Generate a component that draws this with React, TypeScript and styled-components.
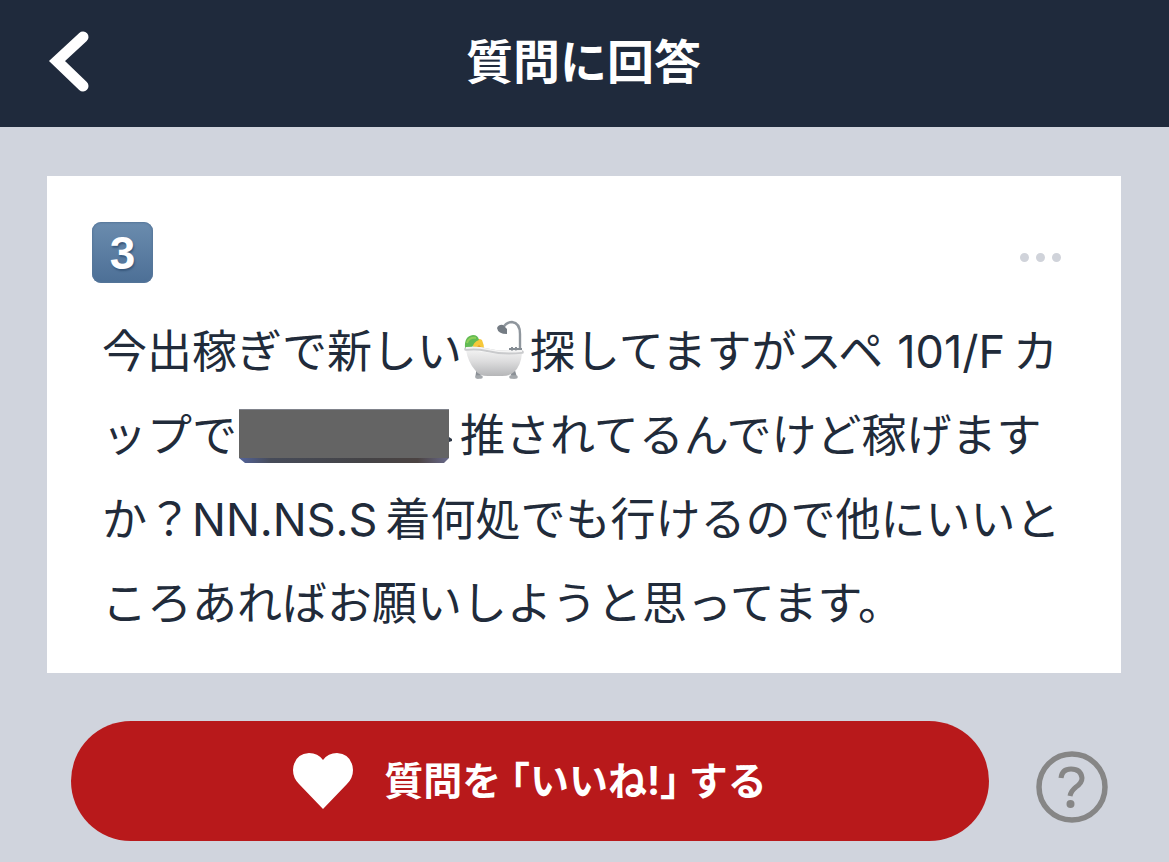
import React from "react";
import styled, { createGlobalStyle } from "styled-components";

const GlobalStyle = createGlobalStyle`
  *, *::before, *::after { box-sizing: border-box; }
  body {
    margin: 0;
    background: #d0d4dd;
    color: #212b3a;
    font-family: Inter, "Noto Sans CJK JP", sans-serif;
  }
  button { font: inherit; color: inherit; border: 0; padding: 0; background: none; cursor: pointer; }
  svg { display: block; }
`;

const Header = styled.header`
  display: grid;
  grid-template-columns: 80px 1fr 80px;
  align-items: center;
  height: 127px;
  padding: 0 32px 4px 30px;
  background: #1f2a3c;
  color: #fff;
`;

const BackButton = styled.button`
  width: 80px;
  height: 80px;
`;

const Title = styled.h1`
  margin: 0;
  text-align: center;
  font-size: 47px;
  line-height: 64px;
  font-weight: 700;
`;

const Main = styled.main`
  padding: 49px 48px 20px 47px;
`;

const Card = styled.article`
  padding: 46px 45px 27px;
  background: #fff;
`;

const CardTop = styled.div`
  display: flex;
  align-items: center;
  justify-content: space-between;
  margin-bottom: 27px;
  padding-right: 8px;
`;

const Keycap = styled.span`
  display: grid;
  place-items: center;
  width: 61px;
  height: 61px;
  border-radius: 9px;
  background: linear-gradient(#6b8cae, #4c6f96);
  box-shadow: inset 0 0 2px 1px #56769a;
  color: #fff;
  font: 700 46px/60px "Liberation Sans", sans-serif;
  text-shadow: 1px 2px 2px #38587c;
`;

const MoreButton = styled.button`
  display: flex;
  justify-content: center;
  align-items: center;
  gap: 7px;
  width: 56px;
  height: 40px;
  margin-top: 10px;
`;

const Dot = styled.span`
  width: 9px;
  height: 9px;
  border-radius: 50%;
  background: #d0d3da;
`;

const Question = styled.p`
  margin: 0;
  padding: 0 8px 0 10px;
  font-size: 45px;
  line-height: 84px;
  line-break: anywhere;
`;

const Latin = styled.span<{ $lead?: boolean }>`
  margin-left: ${(p) => (p.$lead ? "14px" : "0")};
  margin-right: 8px;
`;

const InlineArt = styled.span`
  display: inline-block;
  vertical-align: -12px;
  margin: 0 6px 0 2px;
`;

const Actions = styled.div`
  display: flex;
  align-items: center;
  gap: 47px;
  padding: 48px 13px 0 24px;
`;

const LikeButton = styled.button`
  display: flex;
  flex: 1;
  align-items: center;
  justify-content: center;
  gap: 31px;
  height: 120px;
  border-radius: 60px;
  background: #b8191b;
  color: #fff;
  font-size: 39px;
  line-height: 56px;
  font-weight: 700;
  font-feature-settings: "halt";
`;

const HelpButton = styled.button`
  width: 72px;
  height: 72px;
  margin-top: 11px;
`;

const Bathtub = () => (
  <svg width="60" height="60" viewBox="0 0 60 60" role="img" aria-label="bathtub">
    <defs>
      <linearGradient id="tub" x1="0" y1="0" x2="0" y2="1">
        <stop offset="0" stopColor="#f2f2f2" />
        <stop offset=".45" stopColor="#dcdcdd" />
        <stop offset="1" stopColor="#b5b6b8" />
      </linearGradient>
    </defs>
    <path d="M39 8Q42 2 48 2Q56 3 56 14V30" fill="none" stroke="#8f969d" strokeWidth="2.4" />
    <path d="M33 8Q35 4 39 5L43 9V14Q34 14 33 8Z" fill="#747b83" />
    <path d="M45 29h13M48 27v5M52 27v5" stroke="#858c93" strokeWidth="2" />
    <path d="M9 23Q14 17 18 20Q20 24 20 30H9Z" fill="#f6c83a" />
    <path d="M11 29l4-4 4 4Z" fill="#e99b22" />
    <path d="M1 28Q0 16 9 15Q14 15 15 20Q9 22 8 29Z" fill="#62bb54" />
    <path d="M3 23Q5 17 12 18" fill="none" stroke="#8fcf58" strokeWidth="2" />
    <path d="M15 49l-1 7M48 49l2 7" stroke="#8b9096" strokeWidth="5" strokeLinecap="round" />
    <path d="M13 57h4M47 57h5" stroke="#a4a8ac" strokeWidth="3.6" strokeLinecap="round" />
    <path d="M2 30Q17 31 27 33Q44 35 58 33Q57 46 50 52Q46 56 38 56H24Q15 56 11 50Q4 42 2 30Z" fill="url(#tub)" />
    <path d="M2 29Q14 28 22 30Q38 34 58 32" fill="none" stroke="#c9cacc" strokeWidth="3.6" strokeLinecap="round" />
    <path d="M2 28Q14 27 22 29Q38 33 58 31" fill="none" stroke="#f4f4f4" strokeWidth="1.8" />
  </svg>
);

const MaskedName = () => (
  <svg width="215" height="56" viewBox="0 0 215 56" aria-hidden="true">
    <defs>
      <linearGradient id="edge">
        <stop offset="0" stopColor="#53639a" />
        <stop offset=".15" stopColor="#464b59" />
        <stop offset=".6" stopColor="#444346" />
        <stop offset=".85" stopColor="#4b4342" />
        <stop offset="1" stopColor="#68698a" />
      </linearGradient>
    </defs>
    <path d="M210 29l3 2v2l-3 1z" fill="#303947" />
    <path d="M0 48H210V50L205 55H6L0 50Z" fill="url(#edge)" />
    <path d="M0 1H210V50H0Z" fill="#646464" />
    <path d="M0 1.500H210" stroke="#80838b" />
  </svg>
);

export default function App() {
  return (
    <>
      <GlobalStyle />
      <Header>
        <BackButton aria-label="戻る">
          <svg width="80" height="80" viewBox="0 0 80 80" fill="none">
            <path d="M53 15L27 39L53 64" stroke="#fff" strokeWidth="11" strokeLinecap="round" />
          </svg>
        </BackButton>
        <Title>質問に回答</Title>
      </Header>
      <Main>
        <Card>
          <CardTop>
            <Keycap>3</Keycap>
            <MoreButton aria-label="メニュー">
              <Dot /><Dot /><Dot />
            </MoreButton>
          </CardTop>
          <Question>
            今出稼ぎで新しい
            <InlineArt><Bathtub /></InlineArt>
            探してますがスペ<Latin $lead>101/F</Latin>カップで
            <InlineArt><MaskedName /></InlineArt>
            推されてるんでけど稼げますか？<Latin>NN.NS.S</Latin>着何処でも行けるので他にいいところあればお願いしようと思ってます。
          </Question>
        </Card>
        <Actions>
          <LikeButton>
            <svg width="60" height="56" viewBox="0 0 60 56" aria-hidden="true">
              <path d="M30 56L6 31Q0 25 0 17Q1 1 16 0Q25 0 30 7Q35 0 44 0Q59 1 60 17Q60 25 54 31Z" fill="#fff" />
            </svg>
            <span>質問を 「いいね!」 する</span>
          </LikeButton>
          <HelpButton aria-label="ヘルプ">
            <svg width="72" height="72" viewBox="0 0 72 72" fill="none">
              <circle cx="36" cy="36" r="33" stroke="#868686" strokeWidth="5.500" />
              <path d="M25 27Q26 18 35 18Q45 18 46 27Q46 32 40 36Q35 40 34 45" stroke="#868686" strokeWidth="5" />
              <circle cx="34.500" cy="53" r="4" fill="#868686" />
            </svg>
          </HelpButton>
        </Actions>
      </Main>
    </>
  );
}
